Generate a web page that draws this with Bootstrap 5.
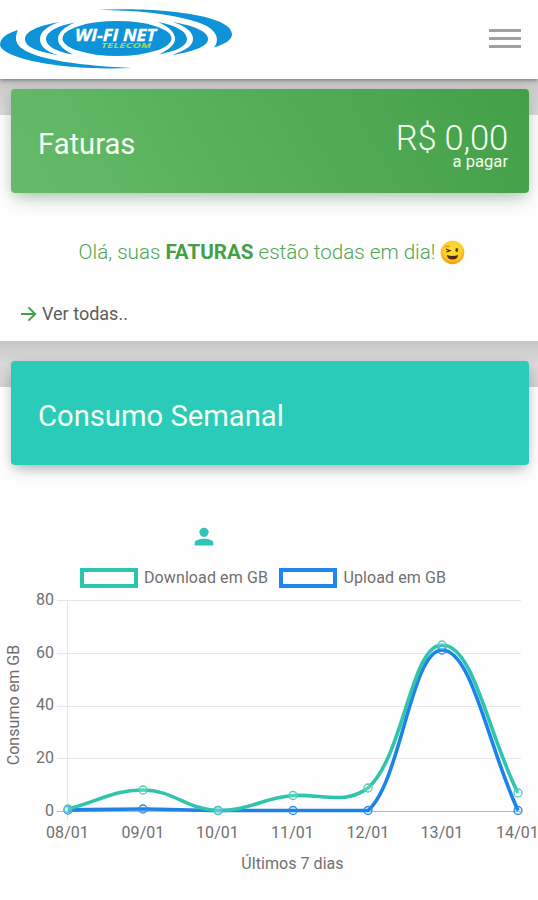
<!DOCTYPE html>
<html lang="pt-BR">
<head>
<meta charset="utf-8">
<meta name="viewport" content="width=device-width, initial-scale=1">
<title>Wi-Fi Net Telecom</title>
<link href="https://cdn.jsdelivr.net/npm/bootstrap@5.3.0/dist/css/bootstrap.min.css" rel="stylesheet">
<style>
  body { font-family: Roboto, sans-serif; background: #d6d6d6; overflow: hidden; min-height: 900px; }
  .topbar { height: 79px; background: #fff; box-shadow: 0 1px 5px rgba(0,0,0,.45); z-index: 2; }
  .menu-btn { width: 32px; margin-right: 17px; margin-top: -2px; gap: 5px; }
  .menu-btn span { height: 3px; background: #a0a0a0; }
  .shade-top { padding-top: 36px; background: linear-gradient(#c8c8c8, #dadada 36px); }
  .shade-mid { padding-top: 46px; background: linear-gradient(#c6c6c6, #dadada 24px, #d2d2d2 46px); }
  .panel { background: #fefefe; border: 0; border-radius: 0; }
  .panel-bills { height: 226px; }
  .panel-usage { height: 514px; }
  .panel-title { height: 104px; margin: -26px 9px 0 11px; padding: 0 21px 0 27px; border-radius: 4px; color: #f4fff2; font-size: 29.2px; line-height: 1; }
  .title-green { background: linear-gradient(60deg, #66bb6a, #43a047); box-shadow: 0 8px 18px -4px rgba(50,110,60,.38), 0 2px 12px rgba(0,0,0,.08); }
  .title-teal { background: #2bcbba; box-shadow: 0 7px 14px -4px rgba(30,50,80,.36), 0 2px 12px rgba(0,0,0,.08); }
  .title-text { padding-top: 8px; }
  .amount { font-size: 34.6px; font-weight: 300; line-height: 34px; letter-spacing: -.2px; }
  .amount-note { font-size: 16.6px; line-height: 14px; }
  .amounts { padding-top: 7px; }
  .status-msg { margin-top: 46px; padding-left: 6px; font-size: 20.6px; line-height: 26px; font-weight: 300; color: #4fa653; }
  .status-msg strong { font-weight: 700; color: #43a047; }
  .status-msg svg { margin-left: 5px; }
  .see-all { margin: 36px 0 0 20px; font-size: 18px; line-height: 26px; color: #5c5c5c; gap: 5px; }
  .user-row { margin: 62px 0 0 194px; height: 22px; }
  .legend { margin: 17px 0 0 80px; height: 24px; font-size: 16px; letter-spacing: .1px; color: #707070; }
  .swatch { width: 58px; height: 20px; border: 4px solid #2ec4ae; margin-right: 6px; }
  .swatch-up { border-color: #1e88f0; margin-left: 11.500px; }
  .chart text { font-family: Roboto, sans-serif; font-size: 16px; letter-spacing: .05px; fill: #707070; }
</style>
<script src="https://cdn.jsdelivr.net/npm/bootstrap@5.3.0/dist/js/bootstrap.bundle.min.js"></script>
</head>
<body>
<nav class="topbar position-relative d-flex justify-content-between align-items-center">
  <svg width="240" height="79" viewBox="0 0 240 79" role="img" aria-label="Wi-Fi Net Telecom">
    <g fill="#0e93d8">
      <path d="M98 9.7C155 7 232 14 232 34C232 40 225 44 214 47.500C221 39 216 28 197 22C170 13 135 10.500 98 9.700Z"/>
      <path d="M18 30C7 33 0 38 0 45C3 60 70 71 132 68C85 66 34 60 20 47C15 42 15 36 18 30Z"/>
      <path d="M60 22C36 26 25 32 25 39C25 47 38 52 58 55C44 51 40 45 40 39C40 32 47 26 60 22Z"/>
      <path d="M75 22.500C56 26 46 32 46 39C46 46 57 52 73 54.500C62 49 58 44 58 39C58 33 64 27 75 22.500Z"/>
      <path d="M158 22C178 26 187 32 187 39C187 46 177 51 159 54.500C170 49 175 44 175 39C175 33 170 27 158 22Z"/>
      <path d="M172 22C196 26 208 32 208 39C208 46 196 51 172 55C187 50 193 45 193 39C193 32 186 26 172 22Z"/>
      <ellipse cx="117" cy="38.500" rx="54.500" ry="17.500"/>
    </g>
    <text x="75" y="41.300" font-family="Open Sans, sans-serif" font-size="15.500" font-weight="700" font-style="italic" fill="#fff" stroke="#fff" stroke-width=".3" textLength="81" lengthAdjust="spacingAndGlyphs">WI-FI NET</text>
    <text x="101" y="47.800" font-family="Open Sans, sans-serif" font-size="7.800" font-weight="700" font-style="italic" fill="#a4d65a" textLength="50" lengthAdjust="spacingAndGlyphs">TELECOM</text>
  </svg>
  <button class="menu-btn btn p-0 border-0 rounded-0 d-flex flex-column" type="button" aria-label="Menu">
    <span class="w-100"></span><span class="w-100"></span><span class="w-100"></span>
  </button>
</nav>
<main>
  <div class="shade-top">
  <section class="panel panel-bills card">
    <header class="panel-title title-green d-flex justify-content-between align-items-center">
      <span class="title-text">Faturas</span>
      <div class="amounts text-end">
        <div class="amount">R$ 0,00</div>
        <div class="amount-note">a pagar</div>
      </div>
    </header>
    <p class="status-msg mb-0 d-flex justify-content-center align-items-center">
      <span>Olá, suas <strong>FATURAS</strong> estão todas em dia!</span>
      <svg width="25" height="25" viewBox="0 0 25 25" aria-hidden="true">
        <defs><radialGradient id="face" cx=".5" cy=".38" r=".62"><stop offset="0" stop-color="#ffe232"/><stop offset=".65" stop-color="#fdcb25"/><stop offset="1" stop-color="#f09a16"/></radialGradient></defs>
        <circle cx="12.500" cy="12.500" r="11.800" fill="url(#face)"/>
        <path d="M4.500 7.500Q6.500 5.500 9.500 6.300" stroke="#c98a20" fill="none" stroke-width="1"/>
        <path d="M6 9L10 10.600L6.500 11.800" stroke="#543410" fill="none" stroke-width="1.300"/>
        <ellipse cx="16.800" cy="10" rx="1.400" ry="1.900" fill="#543410"/>
        <path d="M6.800 15Q12.500 17 18.200 15Q17.500 19.500 12.500 19.500Q7.500 19.500 6.800 15Z" fill="#4b2c10"/>
      </svg>
    </p>
    <a class="see-all d-flex align-items-center text-decoration-none" href="#">
      <svg width="17" height="16" viewBox="0 0 17 16" fill="none" stroke="#43a047" stroke-width="1.900"><path d="M1 8H15M8.500 1.300L15.200 8L8.500 14.700"/></svg>
      <span>Ver todas..</span>
    </a>
  </section>
  </div>
  <div class="shade-mid">
  <section class="panel panel-usage card">
    <header class="panel-title title-teal d-flex align-items-center"><span class="title-text">Consumo Semanal</span></header>
    <div class="user-row">
      <svg class="d-block" width="20" height="20" viewBox="0 0 20 20" fill="#2ec4b6"><circle cx="10" cy="5.300" r="4.600"/><path d="M.700 18.500V16C.700 13 6 11.700 10 11.700S19.300 13 19.300 16V18.500Z"/></svg>
    </div>
    <div class="legend d-flex align-items-center">
      <span class="swatch"></span><span>Download em GB</span>
      <span class="swatch swatch-up"></span><span>Upload em GB</span>
    </div>
    <svg class="chart d-block" width="538" height="300" viewBox="0 590 538 300">
      <g stroke="#e6e6e6" stroke-width="1">
        <path d="M57 600.500H521M57 653.500H521M57 706.500H521M57 758.500H521M67.500 600V821"/>
        <path d="M57 811.500H521" stroke="#b8b8b8"/>
      </g>
      <g text-anchor="end">
        <text x="54" y="605">80</text><text x="54" y="658">60</text><text x="54" y="710">40</text><text x="54" y="763">20</text><text x="54" y="816">0</text>
      </g>
      <g text-anchor="middle">
        <text x="67.500" y="837.500">08/01</text><text x="143" y="837.500">09/01</text><text x="217.500" y="837.500">10/01</text><text x="292.500" y="837.500">11/01</text><text x="368" y="837.500">12/01</text><text x="442" y="837.500">13/01</text><text x="517.500" y="837.500">14/01</text>
        <text x="292.500" y="868.500">Últimos 7 dias</text>
        <text transform="translate(18.500 705) rotate(-90)">Consumo em GB</text>
      </g>
      <g fill="none" stroke-width="3.600">
        <path stroke="#1e82e8" d="M68 810C98 809.500 113 809 143 809C173 809 187 810.500 218 810.500H293H368C401 782 411 650 442 650C472 650 488 746 518 810.500"/>
        <path stroke="#2ec4ae" d="M68 809C98 801.500 113 790 143 790C173 790 187 809.500 218 810.500C247 811.500 262 798 293 795.500C323 794 345 805 368 788C404 756 411 645 442 645C474 645 488 734 518 793"/>
      </g>
      <g fill="#1e82e8" fill-opacity=".08" stroke="#2b8ae8" stroke-width="1.300">
        <circle cx="68" cy="810" r="4"/><circle cx="143" cy="809" r="4"/><circle cx="218" cy="810.500" r="4"/><circle cx="293" cy="810.500" r="4"/><circle cx="368" cy="810.500" r="4"/><circle cx="442" cy="650" r="4"/><circle cx="518" cy="810.500" r="4"/>
      </g>
      <g fill="#fff" fill-opacity=".2" stroke="#4fcdbb" stroke-width="1.300">
        <circle cx="68" cy="809" r="4"/><circle cx="143" cy="790" r="4"/><circle cx="218" cy="810.500" r="4"/><circle cx="293" cy="795.500" r="4"/><circle cx="368" cy="788" r="4"/><circle cx="442" cy="645" r="4"/><circle cx="518" cy="793" r="4"/>
      </g>
    </svg>
  </section>
  </div>
</main>
</body>
</html>
